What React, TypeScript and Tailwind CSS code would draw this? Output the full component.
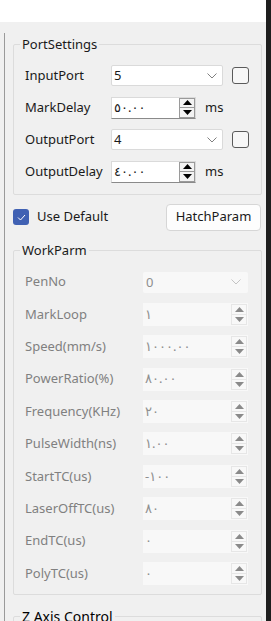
import React from 'react';

const font = { fontFamily: '"Noto Sans", "DejaVu Sans", sans-serif' };

const Chevron: React.FC<{ light?: boolean }> = ({ light }) => (
  <svg width="10" height="6" viewBox="0 0 10 6" className="shrink-0">
    <path d="M0.5 0.5 L5 5 L9.5 0.5" fill="none" stroke={light ? '#c4c4c4' : '#808080'} strokeWidth="1" />
  </svg>
);

const Tri: React.FC<{ up?: boolean; color: string }> = ({ up, color }) => (
  <svg width="9" height="5" viewBox="0 0 9 5">
    <path d={up ? 'M0 5 L4.5 0 L9 5 Z' : 'M0 0 L4.5 5 L9 0 Z'} fill={color} />
  </svg>
);

const Combo: React.FC<{ value: string; disabled?: boolean; width: string }> = ({ value, disabled, width }) => (
  <div
    className={
      disabled
        ? `flex h-[21px] items-center justify-between rounded-[2px] bg-[#f8f8f8] pl-[3px] pr-[7px] text-[#8f8f8f] ${width}`
        : `flex h-[21px] items-center justify-between rounded-[2px] border border-[#dadada] bg-white pl-[2px] pr-[5px] text-[#1a1a1a] ${width}`
    }
  >
    <span className="leading-none">{value}</span>
    <Chevron light={disabled} />
  </div>
);

const Spin: React.FC<{ value: string; disabled?: boolean; width: string }> = ({ value, disabled, width }) => (
  <div
    className={
      disabled
        ? `flex h-[23px] items-stretch bg-[#f8f8f8] ${width}`
        : `flex h-[22px] items-stretch border border-[#dadada] border-b-[#8a8a8a] bg-white ${width}`
    }
  >
    <span
      className={
        disabled
          ? 'flex flex-1 items-center pl-[2px] text-[13px] text-[#8f8f8f]'
          : 'flex flex-1 items-center pl-[2px] text-[13px] text-[#1a1a1a]'
      }
    >
      {value}
    </span>
    <div
      className={
        disabled
          ? 'my-[1px] mr-[1px] flex w-[16px] flex-col border border-[#e6e6e6] bg-[#f8f8f8]'
          : 'flex w-[16px] flex-col'
      }
    >
      <div
        className={
          disabled
            ? 'flex flex-1 items-center justify-center border-b border-[#e6e6e6]'
            : 'flex flex-1 items-center justify-center border border-[#9a9a9a] bg-[#f3f3f3]'
        }
      >
        <Tri up color={disabled ? '#8a8a8a' : '#000'} />
      </div>
      <div
        className={
          disabled
            ? 'flex flex-1 items-center justify-center'
            : 'flex flex-1 items-center justify-center border border-t-0 border-[#9a9a9a] bg-[#f3f3f3]'
        }
      >
        <Tri color={disabled ? '#8a8a8a' : '#000'} />
      </div>
    </div>
  </div>
);

const Check: React.FC = () => (
  <div className="h-[17px] w-[17px] shrink-0 rounded-[3px] border border-[#5a5a5a] bg-[#f7f7f7]" />
);

const portRows = [
  { label: 'InputPort', kind: 'combo', value: '5' },
  { label: 'MarkDelay', kind: 'spin', value: '٥٠.٠٠' },
  { label: 'OutputPort', kind: 'combo', value: '4' },
  { label: 'OutputDelay', kind: 'spin', value: '٤٠.٠٠' },
];

const workRows = [
  { label: 'PenNo', kind: 'combo', value: '0' },
  { label: 'MarkLoop', kind: 'spin', value: '١' },
  { label: 'Speed(mm/s)', kind: 'spin', value: '١٠٠٠.٠٠' },
  { label: 'PowerRatio(%)', kind: 'spin', value: '٨٠.٠٠' },
  { label: 'Frequency(KHz)', kind: 'spin', value: '٢٠' },
  { label: 'PulseWidth(ns)', kind: 'spin', value: '١.٠٠' },
  { label: 'StartTC(us)', kind: 'spin', value: '-١٠٠' },
  { label: 'LaserOffTC(us)', kind: 'spin', value: '٨٠' },
  { label: 'EndTC(us)', kind: 'spin', value: '٠' },
  { label: 'PolyTC(us)', kind: 'spin', value: '٠' },
];

export default function App() {
  return (
    <div className="flex h-[621px] w-[271px] overflow-hidden bg-[#f0f0f0] text-[13px]" style={font}>
      <div className="flex w-[266px] flex-col">
        <div className="h-[22px] shrink-0 bg-white" />
        <div className="ml-[4px] mt-[11px] flex-1 border-l border-[#9a9a9a] pl-[8px] pr-[4px]">
          {/* PortSettings */}
          <fieldset className="mt-[2px] rounded-[2px] border border-[#dcdcdc] pb-[11px]">
            <legend className="ml-[6px] px-[2px] text-[#1a1a1a]">PortSettings</legend>
            <div className="mt-[10px] flex flex-col gap-[10px] pl-[11px] pr-[12px]">
              {portRows.map((r) => (
                <div key={r.label} className="flex h-[22px] items-center">
                  <span className="w-[86px] shrink-0 text-[#1a1a1a]">{r.label}</span>
                  {r.kind === 'combo' ? (
                    <>
                      <Combo value={r.value} width="w-[112px]" />
                      <div className="ml-[9px]">
                        <Check />
                      </div>
                    </>
                  ) : (
                    <>
                      <Spin value={r.value} width="w-[85px]" />
                      <span className="ml-[9px] text-[#1a1a1a]">ms</span>
                    </>
                  )}
                </div>
              ))}
            </div>
          </fieldset>

          {/* Use default / hatch */}
          <div className="mt-[9px] flex items-center justify-between pr-[1px]">
            <div className="flex items-center gap-[8px]">
              <div className="flex h-[16px] w-[16px] items-center justify-center rounded-[3px] bg-[#4061b3]">
                <svg width="9" height="7" viewBox="0 0 9 7">
                  <path d="M1 3.5 L3.5 6 L8 1" fill="none" stroke="#fff" strokeWidth="1" />
                </svg>
              </div>
              <span className="text-[#1a1a1a]">Use Default</span>
            </div>
            <div className="flex h-[27px] w-[95px] items-center justify-center rounded-[4px] border border-[#d6d6d6] bg-[#fdfdfd] text-[#1a1a1a]">
              HatchParam
            </div>
          </div>

          {/* WorkParm */}
          <fieldset className="mt-[10px] rounded-[2px] border border-[#dcdcdc] pb-[9px]">
            <legend className="ml-[6px] px-[2px] text-[#1a1a1a]">WorkParm</legend>
            <div className="mt-[11px] flex flex-col gap-[10.4px] pl-[11px] pr-[12px]">
              {workRows.map((r) => (
                <div key={r.label} className="flex h-[22px] items-center">
                  <span className="w-[118px] shrink-0 text-[#808080]">{r.label}</span>
                  {r.kind === 'combo' ? (
                    <Combo value={r.value} disabled width="w-[105px]" />
                  ) : (
                    <Spin value={r.value} disabled width="w-[105px]" />
                  )}
                </div>
              ))}
            </div>
          </fieldset>

          {/* Z Axis */}
          <fieldset className="mt-[11px] h-[40px] rounded-[2px] border border-[#dcdcdc]">
            <legend className="ml-[6px] px-[2px] text-[14px] text-[#000]">Z Axis Control</legend>
          </fieldset>
        </div>
      </div>
      <div className="w-[5px] bg-[#1e1e1e]" />
    </div>
  );
}
